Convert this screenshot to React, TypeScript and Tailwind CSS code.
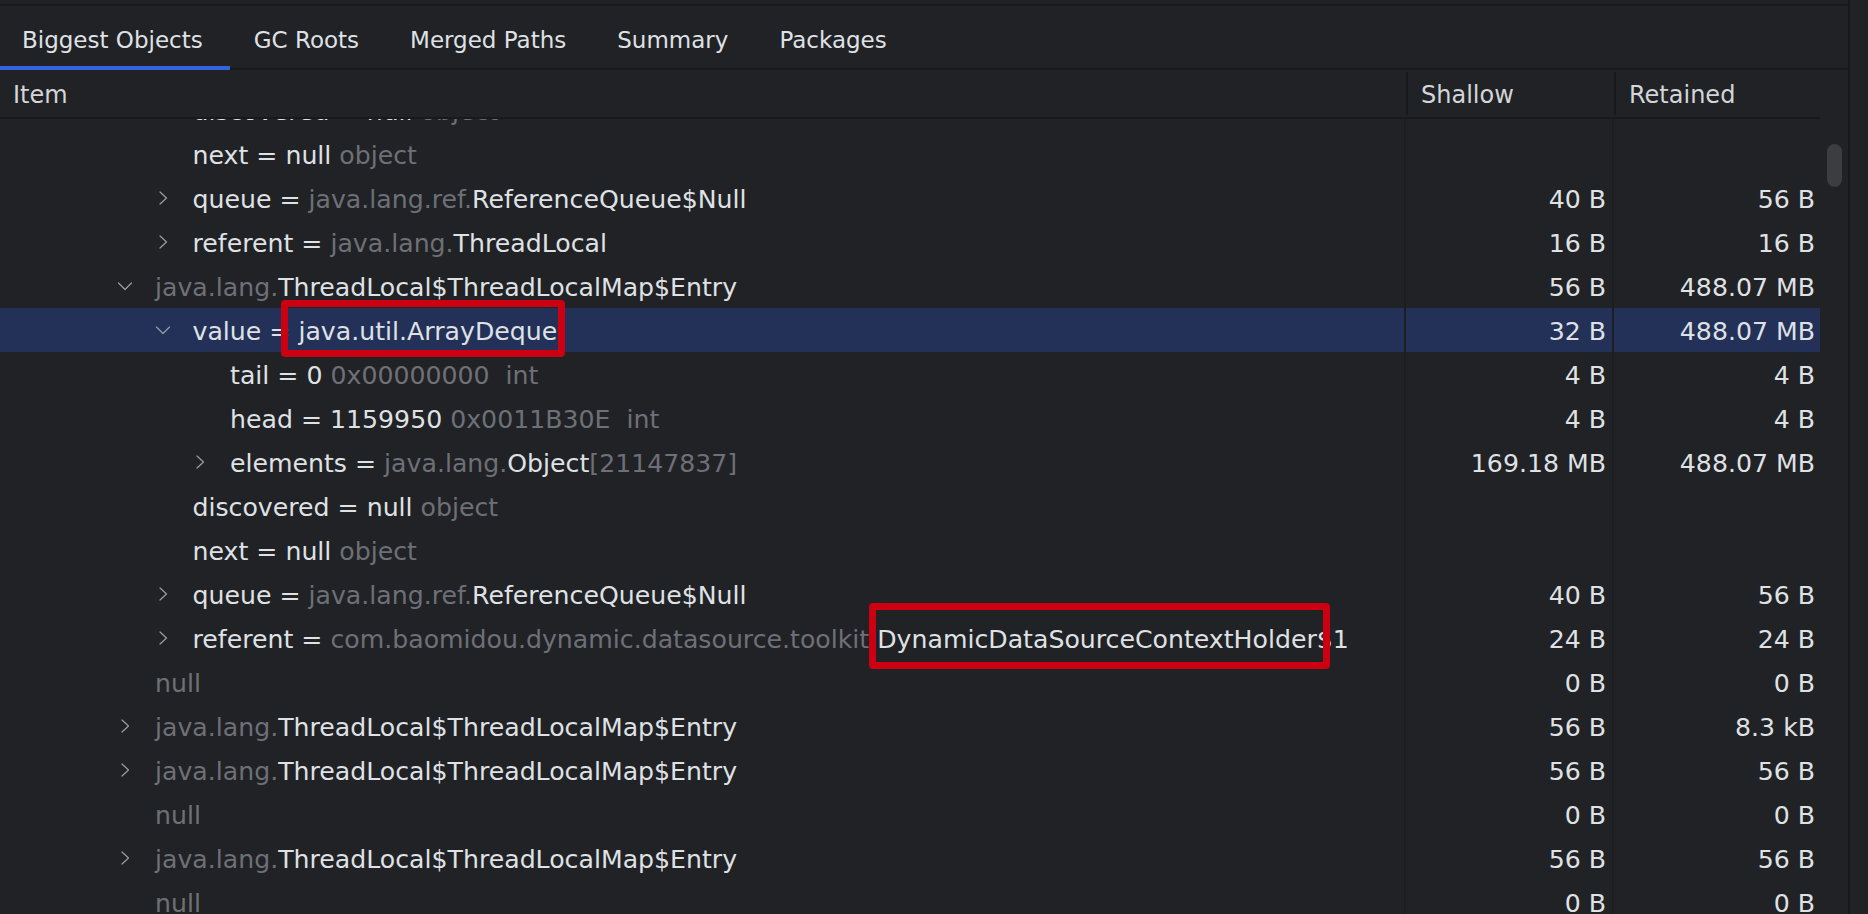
import React from "react";

type Seg = { t: string; g?: boolean };

interface Row {
  level: number;
  chev?: "right" | "down";
  segs: Seg[];
  shallow?: string;
  retained?: string;
  selected?: boolean;
  box?: "first" | "second";
}

const w = (t: string): Seg => ({ t });
const g = (t: string): Seg => ({ t, g: true });

const entry = [g("java.lang."), w("ThreadLocal$ThreadLocalMap$Entry")];

const rows: Row[] = [
  { level: 1, segs: [w("discovered = null "), g("object")] },
  { level: 1, segs: [w("next = null "), g("object")] },
  { level: 1, chev: "right", segs: [w("queue = "), g("java.lang.ref."), w("ReferenceQueue$Null")], shallow: "40 B", retained: "56 B" },
  { level: 1, chev: "right", segs: [w("referent = "), g("java.lang."), w("ThreadLocal")], shallow: "16 B", retained: "16 B" },
  { level: 0, chev: "down", segs: entry, shallow: "56 B", retained: "488.07 MB" },
  { level: 1, chev: "down", segs: [w("value = "), w("java.util.ArrayDeque")], shallow: "32 B", retained: "488.07 MB", selected: true, box: "first" },
  { level: 2, segs: [w("tail = 0 "), g("0x00000000  int")], shallow: "4 B", retained: "4 B" },
  { level: 2, segs: [w("head = 1159950 "), g("0x0011B30E  int")], shallow: "4 B", retained: "4 B" },
  { level: 2, chev: "right", segs: [w("elements = "), g("java.lang."), w("Object"), g("[21147837]")], shallow: "169.18 MB", retained: "488.07 MB" },
  { level: 1, segs: [w("discovered = null "), g("object")] },
  { level: 1, segs: [w("next = null "), g("object")] },
  { level: 1, chev: "right", segs: [w("queue = "), g("java.lang.ref."), w("ReferenceQueue$Null")], shallow: "40 B", retained: "56 B" },
  { level: 1, chev: "right", segs: [w("referent = "), g("com.baomidou.dynamic.datasource.toolkit."), w("DynamicDataSourceContextHolder$1")], shallow: "24 B", retained: "24 B", box: "second" },
  { level: 0, segs: [g("null")], shallow: "0 B", retained: "0 B" },
  { level: 0, chev: "right", segs: entry, shallow: "56 B", retained: "8.3 kB" },
  { level: 0, chev: "right", segs: entry, shallow: "56 B", retained: "56 B" },
  { level: 0, segs: [g("null")], shallow: "0 B", retained: "0 B" },
  { level: 0, chev: "right", segs: entry, shallow: "56 B", retained: "56 B" },
  { level: 0, segs: [g("null")], shallow: "0 B", retained: "0 B" },
];

const indent = ["pl-[117px]", "pl-[154.5px]", "pl-[192px]"];

const Chevron = ({ dir }: { dir: "right" | "down" }) => (
  <svg width="16" height="16" viewBox="0 0 16 16" fill="none" stroke="#9a9da3" strokeWidth="1.2" strokeLinecap="round" strokeLinejoin="round">
    {dir === "right" ? <polyline points="5,2 11.5,8 5,14" /> : <polyline points="1.5,5 8,11.5 14.5,5" />}
  </svg>
);

const TreeRow = ({ row }: { row: Row }) => {
  return (
    <div className={`relative h-[44px] flex items-center text-[25.2px] ${row.selected ? "bg-[#233158]" : ""}`}>
      <div className={`w-[1406px] h-full flex items-center border-r-2 border-[#1c1d20] ${indent[row.level]}`}>
        <div className="w-[38px] flex-none flex items-center">{row.chev && <Chevron dir={row.chev} />}</div>
        <div className="whitespace-pre pt-[3px]">
          {row.segs.map((s, i) => (
            <span key={i} className={s.g ? "text-[#6d7077]" : "text-[#dfe1e5]"}>
              {s.t}
            </span>
          ))}
        </div>
      </div>
      <div className="w-[208px] h-full flex items-center justify-end pr-[6px] pt-[3px] border-r-2 border-[#1c1d20] text-[#dfe1e5]">
        {row.shallow}
      </div>
      <div className="flex-1 h-full flex items-center justify-end pr-[5px] pt-[3px] text-[#dfe1e5]">{row.retained}</div>
      {row.box === "first" && (
        <div className="absolute left-[281px] top-[-8px] w-[284px] h-[57px] border-[7px] border-[#cc0011] rounded-[4px]" />
      )}
      {row.box === "second" && (
        <div className="absolute left-[869px] top-[-13px] w-[461px] h-[66px] border-[7px] border-[#cc0011] rounded-[4px]" />
      )}
    </div>
  );
};

const tabs = ["Biggest Objects", "GC Roots", "Merged Paths", "Summary", "Packages"];

export default function App() {
  return (
    <div className="w-[1868px] h-[914px] overflow-hidden flex bg-[#212225] font-['DejaVu_Sans',sans-serif]">
      <div className="w-[1850px] flex-none flex flex-col border-r-2 border-[#18191b]">
        <div className="h-[6px] flex-none border-b-2 border-[#18191b]" />
        <div className="relative h-[64px] flex-none flex items-center gap-[51px] pl-[22px] pt-[6px] border-b-2 border-[#18191b]">
          {tabs.map((t) => (
            <div key={t} className="text-[23px] text-[#dfe1e5]">
              {t}
            </div>
          ))}
          <div className="absolute left-0 bottom-[-2px] w-[230px] h-[4px] bg-[#3563e0]" />
        </div>
        <div className="flex-1 min-h-0 flex">
          <div className="w-[1820px] flex-none flex flex-col">
            <div className="h-[49px] flex-none flex items-center border-b-2 border-[#18191b] text-[24px] text-[#d3d5d9]">
              <div className="w-[1406px] h-full flex items-center pl-[13px] pt-[3px]">Item</div>
              <div className="w-[2px] h-[43px] bg-[#18191b]" />
              <div className="w-[206px] h-full flex items-center pl-[13px] pt-[3px]">Shallow</div>
              <div className="w-[2px] h-[43px] bg-[#18191b]" />
              <div className="flex-1 h-full flex items-center pl-[13px] pt-[3px]">Retained</div>
            </div>
            <div className="flex-1 min-h-0 overflow-hidden">
              <div className="mt-[-31px]">
                {rows.map((r, i) => (
                  <TreeRow key={i} row={r} />
                ))}
              </div>
            </div>
          </div>
          <div className="flex-1 pl-[7px] pt-[74px]">
            <div className="w-[15px] h-[43px] rounded-full bg-[#3c3d41]" />
          </div>
        </div>
      </div>
      <div className="flex-1" />
    </div>
  );
}
